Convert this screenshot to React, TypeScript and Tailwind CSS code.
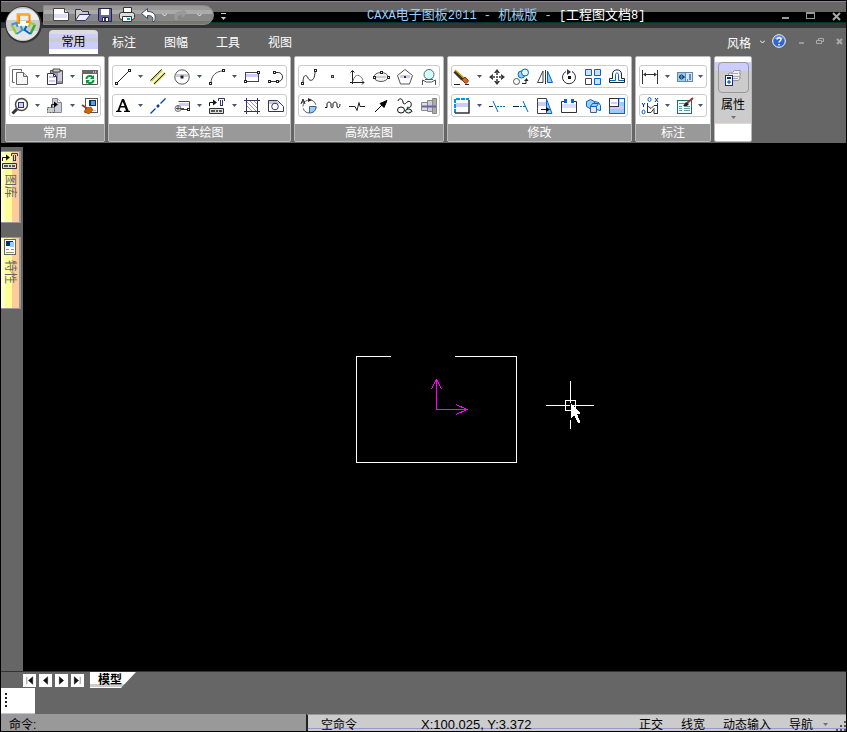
import type { ReactNode } from "react";

type Tool = {
    name: string;
    icon: ReactNode;
    menu?: boolean;
};

type Group = {
    title: string;
    rows: Tool[][];
};

const INK = "#333";
const NAVY = "#333366";
const BLUE = "#0066cc";
const SKY = "#99ccff";
const LILAC = "#ccccff";

const Node = ({ x, y }: { x: number; y: number }) => (
    <rect x={x - 1} y={y - 1} width="2" height="2" fill="#fff" stroke="#222" />
);

const groups: Group[] = [
    {
        title: "常用",
        rows: [
            [
                {
                    name: "复制", menu: true,
                    icon: <g stroke="#666" fill="#fff"><path d="M3.500 14.500h-2v-13h9v2" /><path d="M5.500 4.500h7l4 4v8h-11z" fill="#f6f6f6" /><path d="M12.500 4.500v4h4" fill="#ddd" /></g>,
                },
                {
                    name: "粘贴", menu: true,
                    icon: <g><path d="M4.500 2.500h12v13h-12z" fill="#999" stroke="#555" /><path d="M12 4h4v9h-4z" fill="#ccccdd" /><path d="M7 1h7v3H7z" fill="#ccc" stroke="#444" /><path d="M1.500 5.500h6l3 3v8h-9z" fill="#fff" stroke={NAVY} /><path d="M3 9h6M3 13h6" stroke={LILAC} strokeWidth="2" /><path d="M7.500 5.500v3h3" fill="none" stroke={NAVY} /></g>,
                },
                {
                    name: "刷新",
                    icon: <g><path d="M1.500 2.500h15v14h-15z" fill="#fff" stroke="#555" /><path d="M1 2h16v4H1z" fill="#666" /><path d="M12 4h1M14 4h1" stroke="#fff" /><path d="M5.500 11c0-3 4-4 6-2M12.500 12c0 3-4 4-6 2" fill="none" stroke="#009933" strokeWidth="2" /><path d="M13 7v4H9zM5 16v-4h4z" fill="#009933" /></g>,
                },
            ],
            [
                {
                    name: "缩放", menu: true,
                    icon: <g><path d="M6 12l-4.500 4.500" stroke="#333" strokeWidth="3" /><circle cx="10.500" cy="7.500" r="6" fill="#fff" stroke="#444" strokeWidth="1.500" /><rect x="7.500" y="5.500" width="5" height="5" fill={LILAC} stroke={NAVY} /></g>,
                },
                {
                    name: "平移", menu: true,
                    icon: <g><path d="M6.500 1.500h5l4 4v10h-9z" fill="#ccccdd" stroke="#888" /><path d="M11.500 1.500v4h4" fill="#fff" stroke="#888" /><rect x="1.500" y="10.500" width="7" height="5" fill="#ccc" stroke="#555" strokeDasharray="2 1" /><path d="M5.500 10V7.500H9" fill="none" stroke="#222" /><path d="M8 4.500v6l4-3z" fill="#000" /></g>,
                },
                {
                    name: "格式刷",
                    icon: <g><rect x="4.500" y="1.500" width="12" height="14" fill="#fff" stroke="#555" /><path d="M8 3h7v6H8z" fill="#003366" /><path d="M10 4h4v4h-4z" fill="#6699cc" /><path d="M1 8l6 4" stroke="#993333" strokeWidth="2" /><path d="M5 11l5-1 2 3-4 4-5-2z" fill="#cc6600" stroke="#993300" strokeWidth=".6" /><path d="M12 13.500h3" stroke="#ccc" /></g>,
                },
            ],
        ],
    },
    {
        title: "基本绘图",
        rows: [
            [
                { name: "直线", menu: true, icon: <g><path d="M3 15L15 3" stroke="#222" /><Node x={2.5} y={15.5} /><Node x={15.5} y={2.5} /></g> },
                { name: "平行线", icon: <g fill="none"><path d="M2 13L13 2M5 16L16 5" strokeWidth="2.500" stroke="#cccc66" /><path d="M1.500 12.500l11-11M5 16L16 5" stroke="#333300" /></g> },
                { name: "圆", menu: true, icon: <g><circle cx="9" cy="9" r="7.200" fill="#fff" stroke="#555" /><path d="M3 6h12v3H3z" fill="#ccccdd" /><rect x="7.500" y="7.500" width="3" height="3" fill="#222" /></g> },
                { name: "圆弧", menu: true, icon: <g fill="none"><path d="M3 15C3 8 8 3 15 3" stroke="#555" /><Node x={2.5} y={15.5} /><Node x={15.5} y={2.5} /></g> },
                { name: "矩形", icon: <g><rect x="2.500" y="4.500" width="13" height="9" fill="#fff" stroke="#444" /><path d="M3 6h12v3H3z" fill={LILAC} /><Node x={2.5} y={13.5} /><Node x={15.5} y={4.5} /></g> },
                { name: "多段线", icon: <g fill="none"><path d="M8 4.500h3c6 0 6 9 0 9H2" stroke="#333" /><Node x={7.5} y={4.5} /><Node x={10.5} y={13.5} /><Node x={2.5} y={13.5} /></g> },
            ],
            [
                { name: "文字", menu: true, icon: <path d="M2 15v-1l1.500-.5L8 2h2l4.500 11.500 1.500.5v1h-6v-1l2-.5-1.200-3H6.500L5.500 13.500l2 .5v1zM7 9h3.500L8.700 4.500z" fill="#000" /> },
                { name: "中心线", icon: <g stroke="#004499"><path d="M1.500 16.500l5-5M11.500 6.500l5-5" strokeWidth="1.300" /><path d="M8 10l2-2" strokeWidth="2.500" /></g> },
                { name: "轮廓", menu: true, icon: <g><path d="M5.500 4.500h11v8h-9" fill="#fff" stroke="#444" /><path d="M6 6h10v3H6z" fill={LILAC} /><circle cx="5" cy="11.500" r="3" fill="#ddd" stroke="#777" /><path d="M3 11.500h8M5 8v5" stroke="#555" /><Node x={15.5} y={12.5} /></g> },
                { name: "图库", menu: true, icon: <LibraryGlyph /> },
                { name: "剖面线", icon: <g stroke={NAVY} fill="none"><path d="M3.500 1v16M14.500 1v16M1 3.500h16M1 14.500h16" /><path d="M4 9l5 5M4 5l9 9M7 4l7 7M11 4l3 3" stroke="#9999bb" /></g> },
                { name: "填充", icon: <g><path d="M1.500 3.500h9l6 6v5h-15z" fill="#fff" stroke={NAVY} /><path d="M2 4h8l3 3H2z" fill="#ccc" /><circle cx="8" cy="9.500" r="3.300" fill="#fff" stroke={NAVY} /></g> },
            ],
        ],
    },
    {
        title: "高级绘图",
        rows: [
            [
                { name: "样条", icon: <g fill="none"><path d="M3 15C3 5 7 7 8 10s7 5 7-7" stroke="#222" /><Node x={2.5} y={15.5} /><Node x={15.5} y={2.5} /></g> },
                { name: "点", icon: <rect x="7.500" y="7.500" width="2" height="2" fill={LILAC} stroke={NAVY} /> },
                { name: "公式曲线", icon: <g stroke="#222" fill="none"><path d="M4.500 16V3M2 14.500h14" /><path d="M2.500 4.500l2-2 2 2M14 12.500l2 2-2 2" /><path d="M5 13C7 5 12 6 15 12" stroke="#777" /></g> },
                { name: "椭圆", icon: <g><ellipse cx="9" cy="9" rx="7" ry="4.500" fill="#f4f4f4" stroke="#555" /><path d="M4 8h10v2H4z" fill="#ccc" /><Node x={9.5} y={4.5} /><Node x={2.5} y={9.5} /><Node x={16.5} y={9.5} /></g> },
                { name: "正多边形", icon: <g><path d="M9 1.500l7.500 6-3 8.500h-9l-3-8.500z" fill="#fff" stroke="#555" /><path d="M4 7h10v3H4z" fill={LILAC} /><rect x="8" y="8" width="2" height="2" fill="#333" /></g> },
                { name: "局部放大", icon: <g><circle cx="9" cy="6.500" r="5" fill="#ccffff" stroke="#666" /><path d="M2.500 17v-5l4 2h5l4-2v5M5 11.500h8" fill="none" stroke="#555" /></g> },
            ],
            [
                { name: "圆弧标注", icon: <g><circle cx="9.500" cy="9.500" r="6.500" fill="#fff" stroke="#555" strokeDasharray="8 2" /><path d="M9.500 9.500H16c0 4-3 6.500-6.500 6.500z" fill="#99ccff" stroke="#336699" /><path d="M1 7l2-5 2 5M2 5h3" fill="none" stroke="#222" /><path d="M8 1v4l4-2z" fill="#222" /></g> },
                { name: "波浪线", icon: <path d="M1 10.500h2V7c0-2.500 4-2.500 4 0v2c0 2.500 2 2.500 2 0V7c0-2.500 4-2.500 4 0v2c0 3 3 2 3-2" fill="none" stroke="#111" /> },
                { name: "双折线", icon: <path d="M1 9.500h6l2 4 2-8 1 4h5" fill="none" stroke="#222" /> },
                { name: "箭头", icon: <g><path d="M3 15l8-8" stroke="#000" /><path d="M15 3.500l-3 7-4-4z" fill="#000" stroke="#000" /></g> },
                { name: "齿轮", icon: <g fill="none" stroke="#111"><path d="M2 4c1-4 5-2 5 1s3 2 4 0c3-2 5 1 4 4s-4 0-4 2 5 1 5 4" /><ellipse cx="5" cy="13" rx="3.500" ry="3" /><ellipse cx="12.500" cy="14" rx="3" ry="2" fill="#ccffff" /></g> },
                { name: "孔轴", icon: <g stroke="#888"><path d="M1.500 5.500h6v8h-6z" fill="#ddddee" /><path d="M7.500 3.500h5v11h-5z" fill="#ccccdd" /><path d="M12.500 1.500h4v15h-4z" fill="#aaa" /><path d="M2 9.500h14" stroke="#666699" strokeWidth="2" /></g> },
            ],
        ],
    },
    {
        title: "修改",
        rows: [
            [
                { name: "删除", menu: true, icon: <g><path d="M1.500 3.500l8 8" stroke="#333" strokeWidth="3" /><path d="M2 2l9 8" stroke="#cc9900" strokeWidth="1.500" /><path d="M9 12l3-3 3 3c1 2-2 4-3 3z" fill="#cc6633" stroke="#993300" /><path d="M1 16.500h6M12 16.500h4" stroke="#222" /></g> },
                { name: "平移", icon: <g fill="#333"><path d="M9 1l3 4H6zM9 17l3-4H6zM1 9l4-3v6zM17 9l-4-3v6z" /><path d="M8 4h2v3H8zM8 11h2v3H8zM4 8h3v2H4zM11 8h3v2h-3zM8 8h2v2H8z" fill="#666" /></g> },
                { name: "平移复制", icon: <g fill="none"><circle cx="9.500" cy="6.500" r="3.500" stroke={BLUE} fill={SKY} /><circle cx="13" cy="4.500" r="3.500" stroke={BLUE} fill="#e6f2ff" /><circle cx="4.500" cy="13.500" r="3" stroke="#555" /><path d="M10 15.500h4V12" stroke="#222" /><path d="M12 13l2.500-3 2 3z" fill="#222" /></g> },
                { name: "镜像", icon: <g><path d="M7 3v11.500H1.500z" fill="#fff" stroke="#444" /><path d="M11.500 3v11.500h5z" fill={SKY} stroke={BLUE} /><path d="M9.500 2v14" stroke={INK} /></g> },
                { name: "旋转", icon: <g><path d="M12 3.500a6.500 6.500 0 1 1-6 0" fill="none" stroke="#333" /><path d="M12 3.500l2 1.500" fill="none" stroke="#666" /><path d="M7 1l4 3-4 3z" fill={NAVY} /><rect x="8" y="8" width="3" height="3" fill="#111" /></g> },
                { name: "阵列", icon: <g stroke={BLUE} fill="#cce0ff"><path d="M1.500 1.500h6v6h-6zM10.500 1.500h6v6h-6zM10.500 10.500h6v6h-6z" /><path d="M1.500 10.500h6v6h-6z" fill="#fff" stroke="#444" /></g> },
                { name: "偏移", icon: <g fill="none"><path d="M1.500 14.500h15v-4h-3V6c0-5.500-9-5.500-9 0v4.500h-3z" stroke="#222" fill="#fff" /><path d="M2 12.500h5.500V6.500c0-2 3-2 3 0v6H16" stroke={BLUE} /></g> },
            ],
            [
                { name: "拉伸", menu: true, icon: <g><rect x="2" y="2" width="14" height="14" fill="#fff" /><path d="M3 6h12v4H3z" fill={LILAC} /><path d="M2 16V2h14" fill="none" stroke="#0099dd" strokeWidth="2" strokeDasharray="4 1" /><path d="M16 3v13H2" fill="none" stroke="#333" strokeWidth="1.500" /></g> },
                { name: "裁剪", icon: <g><path d="M1 9.500h4" stroke="#333" /><path d="M5 4l5 11" stroke={BLUE} /><path d="M9 9.500h8" stroke={BLUE} strokeDasharray="2 1" /></g> },
                { name: "延伸", icon: <g><path d="M1 9.500h6" stroke="#222" /><path d="M8 9.500h5" stroke={BLUE} strokeDasharray="2 1" /><path d="M11 4l5 11" stroke={BLUE} /></g> },
                { name: "拉长", icon: <g><path d="M1.500 1.500h9v15h-9z" fill="#fff" stroke="#444" /><path d="M2 5h8v4H2z" fill={LILAC} /><path d="M10.500 2l5.500 14.500h-5.500z" fill={SKY} stroke={BLUE} /><path d="M5 12.500h6" stroke="#111" /><path d="M10 10l4 2.500-4 2.500z" fill="#111" /></g> },
                { name: "打断", icon: <g><path d="M1.500 4.500h15v11h-15z" fill="#fff" stroke="#333" /><path d="M2 7h14v4H2z" fill="#ddddff" /><path d="M4 2h3v4H4zM11 2h3v4h-3z" fill={BLUE} /><path d="M7 4.500h4" stroke="#fff" /></g> },
                { name: "分解", icon: <g stroke={BLUE} fill={SKY}><path d="M2.500 4.500l4-2 4 2v5l-3 3-5-3z" /><path d="M10.500 4.500l4 1 2 3v5l-4-1z" fill="#cce6ff" /><path d="M6.500 9.500h6v6h-6z" fill="#e6e6ff" stroke="#336699" /><path d="M6.500 9.500l2-3h6l-2 3z" /></g> },
                { name: "缩放", icon: <g><rect x="1.500" y="1.500" width="15" height="15" fill={SKY} stroke={BLUE} /><path d="M2 9h14v3H2z" fill={LILAC} /><rect x="1.500" y="1.500" width="9" height="8" fill="#fff" stroke="#333" /><path d="M3 5h6v2H3z" fill={LILAC} /><rect x="12" y="2" width="4" height="3" fill="#fff" /></g> },
            ],
        ],
    },
    {
        title: "标注",
        rows: [
            [
                { name: "尺寸标注", menu: true, icon: <g stroke="#333"><path d="M1.500 2v14M16.500 2v14M3 6.500h12" /><path d="M2 6.500l3-2v4zM16 6.500l-3-2v4z" fill="#333" stroke="none" /></g> },
                { name: "形位公差", menu: true, icon: <g><rect x="1" y="4" width="16" height="10" fill="#6688aa" /><rect x="2" y="5" width="7" height="8" fill="#99ccee" /><rect x="10" y="5" width="6" height="8" fill="#cce6ff" /><circle cx="5.500" cy="9" r="2" fill="none" stroke="#003366" /><path d="M3 9h6M11 12h1M14 6v6" stroke="#003366" /></g> },
            ],
            [
                { name: "坐标标注", menu: true, icon: <g fill="none"><path d="M6.500 6v10M6 8.500l4 3 3-3h4M6 15.500h4l3-4v5h4M16.500 6v11" stroke="#333" /><ellipse cx="8.500" cy="2.500" rx="1.500" ry="2" stroke="#0066cc" /><ellipse cx="2.500" cy="15" rx="1.500" ry="2" stroke="#0066cc" /><path d="M14 1l3 4M17 1l-3 4M1 6l1.500 2L4 6M2.500 8v2" stroke="#003399" /></g> },
                { name: "标注编辑", menu: true, icon: <g><rect x="1.500" y="3.500" width="14" height="13" fill="#e6ffff" stroke="#336666" /><path d="M3 6.500h6M3 9.500h3M8 9.500h6M3 11.500h3M8 11.500h6M3 13.500h3M8 13.500h6" stroke="#669999" /><path d="M11 6l6-5" stroke="#993333" strokeWidth="2" /><path d="M7 9l3-4 3 2-2 2z" fill="#222" /></g> },
            ],
        ],
    },
];

function LibraryGlyph() {
    return (
        <g fill="none">
            <path d="M1.500 9V5.500h4" stroke="#111" />
            <path d="M5 2.500l4 3-4 3z" fill="#111" />
            <path d="M10.500 4V1.500h6V4M12.500 3v6M14.500 3v6M12 8.500h3" stroke={NAVY} />
            <path d="M1.500 11.500h14v5h-14z" fill="#ddd" stroke="#333" />
            <path d="M3 14h4M8 14h2M11 14h3" stroke="#555" strokeWidth="2" />
        </g>
    );
}

function Icon({ children }: { children: ReactNode }) {
    return <svg viewBox="0 0 18 18" className="block h-[18px] w-[18px] shrink-0" aria-hidden="true">{children}</svg>;
}

function Caret({ className = "text-gray-600" }: { className?: string }) {
    return <svg viewBox="0 0 5 3" className={`h-[3px] w-[5px] ${className}`} aria-hidden="true"><path d="M0 0h5L2.500 3z" fill="currentColor" /></svg>;
}

function ToolRow({ tools }: { tools: Tool[] }) {
    return (
        <div className="flex h-[23px] items-center rounded-[3px] border border-[#ccc] bg-white">
            {tools.map((tool, i) => (
                <div key={tool.name} className={tool.menu || i === tools.length - 1 ? "flex" : "mr-1 flex"}>
                    <button aria-label={tool.name} className="flex h-5 w-5 items-center justify-center hover:bg-blue-50">
                        <Icon>{tool.icon}</Icon>
                    </button>
                    {tool.menu && (
                        <button aria-label={`${tool.name}菜单`} className={i === tools.length - 1 ? "flex h-5 w-[11px] items-center justify-center" : "flex h-5 w-[15px] items-center justify-center"}>
                            <Caret />
                        </button>
                    )}
                </div>
            ))}
        </div>
    );
}

function RibbonGroup({ group }: { group: Group }) {
    return (
        <section className="flex flex-col rounded-[2px] border border-[#bbb] bg-white">
            <div className="flex flex-1 flex-col gap-[6px] px-[3px] pt-2">
                {group.rows.map((row, i) => <ToolRow key={i} tools={row} />)}
            </div>
            <h2 className="h-[17px] bg-[#999] text-center text-xs leading-[18px] text-white">{group.title}</h2>
        </section>
    );
}

function TitleBar() {
    return (
        <header className="relative flex h-7 shrink-0 items-stretch border-t border-black bg-[linear-gradient(#699_0_1px,#666_1px_11px,#000_11px_21px,#033_21px_22px,#333_22px)]">
            <button aria-label="菜单" className="absolute left-1 top-[5px] z-10 h-[37px] w-[37px]">
                <svg viewBox="0 0 37 37" aria-hidden="true">
                    <circle cx="18.500" cy="18.500" r="18.500" fill="#333" />
                    <circle cx="18" cy="18" r="17" fill="#ccc" />
                    <path d="M2 14C6-1 30-1 34 14z" fill="#eee" />
                    <path d="M3 25c6 12 24 12 30 0z" fill="#e6e6e6" />
                    <path d="M14 15l-3 3 4 3 3-1 3 1 4-3-3-3z" fill="#fff" />
                    <path d="M11 17h3V8.500h-2 12.500M24.500 8.500V16H21" fill="none" stroke="#f80" strokeWidth="2" />
                    <path d="M12.500 16V8.500h12" fill="none" stroke="#fa3" strokeWidth="2" />
                    <path d="M6.500 18.500l5 9.500" fill="none" stroke="#9c3" strokeWidth="2.500" />
                    <path d="M6.500 18.500l5-1.500 1 4M11.500 28l6-4-2-4" fill="none" stroke="#39c" strokeWidth="2" />
                    <path d="M30 18.500L25.500 28" fill="none" stroke="#3a3" strokeWidth="2.500" />
                    <path d="M30 18.500l-5-1.500-1 4" fill="none" stroke="#9c3" strokeWidth="2" />
                    <path d="M25.500 28l-6-4 2-4" fill="none" stroke="#06c" strokeWidth="2" />
                </svg>
            </button>
            <div className="ml-[42px] mt-1 flex h-5 w-[171px] items-center rounded-r-full border border-[#888] bg-[linear-gradient(#999_0_4px,#aaa_4px_8px,#888_8px_15px,#966_15px_16px,#777_16px)] pl-2">
                <button aria-label="新建" className="w-[22px]">
                    <Icon><path d="M1.500 2.500h11l4 4v8h-15z" fill="#fff" stroke="#444" /><path d="M2 8h13v4H2z" fill="#ddddff" /><path d="M12.500 2.500v4h4" fill="#ddd" stroke="#444" /></Icon>
                </button>
                <button aria-label="打开" className="w-[22px]">
                    <Icon><path d="M1.500 14.500v-11h5l2 2h6v3" fill="#ccc" stroke="#333" /><path d="M1.500 14.500l4-6h11l-5 6z" fill="#eef" stroke="#336" /></Icon>
                </button>
                <button aria-label="保存" className="w-[22px]">
                    <Icon><path d="M2.500 2.500h13v13h-12l-1-1z" fill="#669" stroke="#224" /><path d="M5 3h8v6H5z" fill="#fff" /><path d="M6.500 11.500h6v4h-6z" fill="#fff" stroke="#224" /><path d="M8 12h2v3H8z" fill="#336" /></Icon>
                </button>
                <button aria-label="打印" className="w-[22px]">
                    <Icon><path d="M5.500 1.500h8v6h-8z" fill="#fff" stroke="#333" /><rect x="1.500" y="6.500" width="15" height="7" rx="2" fill="#ddd" stroke="#333" /><path d="M4.500 10.500h9v5h-9z" fill="#fff" stroke="#333" /><path d="M9 13h3" stroke="#09c" strokeWidth="2" /></Icon>
                </button>
                <button aria-label="撤销" className="w-[22px]">
                    <Icon><path d="M1.500 7.500l6-5v3c7 0 9 4 7 10h-2c1-4 0-6-5-6v3z" fill="#fff" stroke="#446" /></Icon>
                </button>
                <svg viewBox="0 0 5 4" className="h-1 w-[5px]" aria-hidden="true"><path d="M0 .500L2.500 3 5 .500" fill="none" stroke="#eee" /></svg>
                <button aria-label="重做" className="ml-1 w-[22px]">
                    <Icon><path d="M16 7l-5-5v3c-7 0-9 4-7 9h3c-1-4 0-5 4-5v3z" fill="#999" /></Icon>
                </button>
                <svg viewBox="0 0 5 4" className="ml-1 h-1 w-[5px]" aria-hidden="true"><path d="M0 .500L2.500 3 5 .500" fill="none" stroke="#eee" /></svg>
            </div>
            <button aria-label="自定义" className="ml-[7px] mt-3 h-2 w-[5px] border-t border-[#ccc] pt-px"><Caret className="text-[#ccc]" /></button>
            <h1 className="ml-[141px] mt-1 whitespace-pre text-[13px] leading-5 text-[#99ccff]">
                <span className="font-[Liberation_Mono] text-[12px]">CAXA</span>电子图板<span className="font-[Liberation_Mono] text-[12px]">2011 - </span>机械版<span className="font-[Liberation_Mono] text-[12px]"> - </span>
                <span className="text-white"><span className="font-[Liberation_Mono] text-[12px]">[</span>工程图文档<span className="font-[Liberation_Mono] text-[12px]">8]</span></span>
            </h1>
            <div className="ml-auto mr-[5px] mt-[9px] flex h-3 gap-[17px] text-[#aaa]">
                <button aria-label="最小化" className="h-[9px] w-[7px] border-b-2 border-[#999]" />
                <button aria-label="最大化" className="mt-[2px] h-[7px] w-[9px] border border-t-2 border-[#999]" />
                <button aria-label="关闭" className="w-[9px]"><svg viewBox="0 0 9 9" className="h-[9px] w-[9px]"><path d="M1 1l7 7M8 1L1 8" stroke="#aaa" strokeWidth="2" /></svg></button>
            </div>
        </header>
    );
}

function TabBar() {
    return (
        <nav className="flex h-7 shrink-0 items-start pl-[48px] pr-[3px] text-xs text-white">
            <button className="mt-[2px] h-6 w-[49px] rounded-t border-b border-white bg-[linear-gradient(#ddd_0_4px,#ccf_4px_8px,#ccc_8px_12px,#ccf_12px_19px,#fff_19px)] pt-px text-black">常用</button>
            {["标注", "图幅", "工具", "视图"].map((tab) => (
                <button key={tab} className="mt-[3px] h-6 w-[52px]">{tab}</button>
            ))}
            <div className="ml-auto mt-[3px] flex h-6 items-center">
                <button className="mt-[2px] flex items-center gap-[9px]">风格<svg viewBox="0 0 5 4" className="mb-1 h-1 w-[5px]"><path d="M0 .500L2.500 3 5 .500" fill="none" stroke="#fff" /></svg></button>
                <button aria-label="帮助" className="mb-1 ml-[7px]">
                    <svg viewBox="0 0 14 14" className="h-[14px] w-[14px]"><circle cx="7" cy="7" r="6.300" fill="#36c" stroke="#fff" /><path d="M2 5c1-4 9-4 10 0z" fill="#69e" /><path d="M5 5.500C5 3 9.500 3 9 5.500 9 7 7 7 7 8.500M7 10v1.500" fill="none" stroke="#fff" strokeWidth="1.500" /></svg>
                </button>
                <div className="mb-1 ml-[13px] flex items-center gap-3">
                    <button aria-label="最小化文档" className="h-[6px] w-[5px] border-b-2 border-[#999]" />
                    <button aria-label="还原文档"><svg viewBox="0 0 8 8" className="h-2 w-2"><path d="M2.500 3.500v-2h5v3h-2M.500 3.500h5v3h-5z" fill="none" stroke="#aaa" /></svg></button>
                    <button aria-label="关闭文档"><svg viewBox="0 0 7 7" className="h-[7px] w-[7px]"><path d="M1 1l5 5M6 1L1 6" stroke="#aaa" strokeWidth="2" /></svg></button>
                </div>
            </div>
        </nav>
    );
}

function Ribbon() {
    return (
        <div className="flex h-[87px] shrink-0 gap-[3px] pb-px pl-1">
            {groups.map((group) => <RibbonGroup key={group.title} group={group} />)}
            <button className="flex w-[38px] flex-col items-center rounded-[2px] border border-[#bbb] bg-[linear-gradient(#fff_0_5px,#ccf_5px_14px,#ccc_14px_66px,#fcc_66px_67px,#fff_67px)] pt-[5px] text-xs text-black">
                <span className="flex h-[31px] w-[31px] items-center justify-center rounded-[4px] border border-[#999]">
                    <svg viewBox="0 0 18 18" className="h-[18px] w-[18px]"><path d="M4.500 7V4.500l4-1 2-2h6l-1 3h1l-1 4h1l-2 3h-6z" fill="#eee" stroke="#999" /><path d="M7 4.500h7M9 7.500h6M9 9.500h5" stroke="#aaa" /><rect x="1.500" y="6.500" width="7" height="10" fill="#fff" stroke="#003399" /><path d="M3 8h4v2H3z" fill="#036" /><path d="M3 13h4M5 11v4" stroke="#003399" /></svg>
                </span>
                <span className="mt-[2px] leading-5">属性</span>
                <Caret className="mt-px text-gray-500" />
            </button>
        </div>
    );
}

function SidePanel() {
    const tab = "flex h-[72px] w-5 flex-col items-center gap-1 border-y border-r-2 border-[#999] bg-[linear-gradient(90deg,#ffc_0_4px,#ff9_4px_11px,#fc9_11px)] text-xs text-[#666]";
    return (
        <aside className="mt-1 flex w-[22px] shrink-0 flex-col gap-[14px] bg-[#666] pt-1">
            <button className={tab}>
                <Icon><LibraryGlyph /></Icon>
                <span className="leading-4 [text-orientation:sideways] [writing-mode:vertical-rl]">图库</span>
            </button>
            <button className={tab}>
                <Icon><rect x="3.500" y="1.500" width="11" height="15" fill="#fff" stroke="#666" /><path d="M5 3h7v5H5z" fill="#036" /><path d="M9 4h4v5H9z" fill="#9cf" /><path d="M5 11.500h3M10 11.500h3M5 14.500h8" stroke="#996" /></Icon>
                <span className="leading-4 [text-orientation:sideways] [writing-mode:vertical-rl]">特性</span>
            </button>
        </aside>
    );
}

function Canvas() {
    return (
        <div className="relative min-w-0 flex-1 overflow-hidden bg-black">
            <svg className="absolute inset-0 h-full w-full" fill="none" shapeRendering="crispEdges" aria-hidden="true">
                <path d="M368 213.500h-34.500v106h160v-106H432" stroke="#fff" />
                <path d="M413.500 236v30.500h31M413.500 236l-5 10M413.500 236l5 10M444 266.500l-11-5M444 266.500l-11 5" stroke="#f0f" />
                <path d="M523 262.500h19M552 262.500h19M547.500 238v22M547.500 277v9M542.500 257.500h10v10h-10zM542 262.500h5M548 262.500h4" stroke="#fff" />
                <path d="M548 261v14l3-3 4 8h2v-2l-3-7h3v-1l-8-9z" fill="#fff" />
            </svg>
        </div>
    );
}

function SheetTabs() {
    const arrows = [
        { name: "首页", d: "M3.500 2v7M9 2L5 5.500 9 9z" },
        { name: "上一页", d: "M8 2L4 5.500 8 9z" },
        { name: "下一页", d: "M4 2l4 3.500L4 9z" },
        { name: "末页", d: "M8.500 2v7M3 2l4 3.500L3 9z" },
    ];
    return (
        <div className="flex h-[17px] shrink-0 items-start border-t border-[#333] pl-[22px]">
            <div className="mt-[2px] flex gap-[3px]">
                {arrows.map((a) => (
                    <button key={a.name} aria-label={a.name} className="h-[13px] w-[13px] bg-white">
                        <svg viewBox="0 0 12 11" className="h-[13px] w-[13px]"><path d={a.d} fill="#111" stroke="#111" strokeWidth=".4" /></svg>
                    </button>
                ))}
            </div>
            <button className="ml-[6px] h-4 w-[46px] bg-[linear-gradient(#fff_0_12px,#ccc_12px_15px,#fff_15px)] pl-2 text-left text-xs font-bold leading-4 text-black [clip-path:polygon(0_0,100%_0,31px_100%,0_100%)]">模型</button>
        </div>
    );
}

function StatusBar() {
    return (
        <footer className="flex h-[18px] shrink-0 items-stretch border-b border-black text-xs leading-3 text-black">
            <label className="flex w-[305px] shrink-0 bg-[#999] pl-2 pt-[5px]">
                命令:
                <input aria-label="命令" className="h-3 min-w-0 flex-1 bg-transparent outline-none" />
            </label>
            <div className="flex min-w-0 flex-1 items-start whitespace-nowrap border-l-2 border-t border-l-[#222] border-t-[#999] bg-[linear-gradient(#ccc_0_13px,#99c_13px_14px,#ccc_14px)] pl-[13px] pt-1">
                <span className="w-[100px] shrink-0">空命令</span>
                <output className="font-[Liberation_Sans] text-[13px] leading-3">X:100.025, Y:3.372</output>
                <div className="ml-auto flex gap-[18px]">
                    {["正交", "线宽", "动态输入"].map((item) => <button key={item} className="leading-3">{item}</button>)}
                    <button className="flex items-start gap-[10px] leading-3">导航<Caret className="mt-1 text-gray-500" /></button>
                </div>
                <svg viewBox="0 0 10 10" className="ml-2 mt-[2px] h-[10px] w-[10px] shrink-0"><path d="M8 0h2v2H8zM4 4h2v2H4zM8 4h2v2H8zM0 8h2v2H0zM4 8h2v2H4zM8 8h2v2H8z" fill="#555" /></svg>
            </div>
        </footer>
    );
}

export default function App() {
    return (
        <div className="flex h-screen flex-col overflow-hidden border-x border-black bg-[#666] font-['Liberation_Sans','Noto_Sans_CJK_SC',sans-serif]">
            <TitleBar />
            <TabBar />
            <Ribbon />
            <main className="flex min-h-0 flex-1 bg-black">
                <SidePanel />
                <Canvas />
            </main>
            <SheetTabs />
            <div className="flex h-[26px] shrink-0">
                <div className="w-[34px] border-b border-[#cc9] bg-white pl-1 pt-[5px]">
                    <div className="h-[15px] w-[2px] bg-[repeating-linear-gradient(#222_0_2px,#fff_2px_4px)]" />
                </div>
            </div>
            <StatusBar />
        </div>
    );
}
